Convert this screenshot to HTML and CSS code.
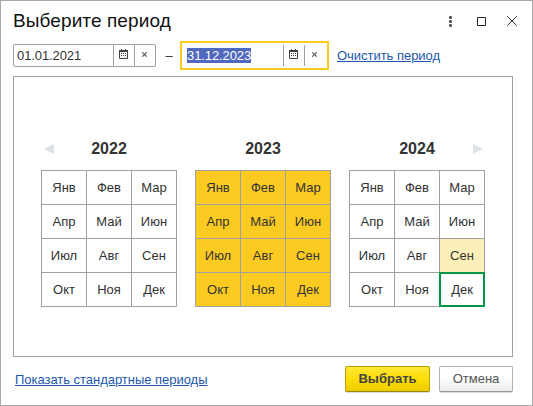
FILE: index.html
```html
<!DOCTYPE html>
<html lang="ru">
<head>
<meta charset="utf-8">
<title>Выберите период</title>
<link rel="stylesheet" href="styles.css">
</head>
<body>
<svg width="0" height="0" class="defs">
  <symbol id="calendar" viewBox="0 0 9 10">
    <path d="M.5 1.5h8v8h-8z" fill="none" stroke="#444"/>
    <path d="M0 1h9v2H0zM2 0h1v1H2zM6 0h1v1H6z" fill="#444"/>
    <path d="M2 4h1v1H2zM4 4h1v1H4zM6 4h1v1H6zM2 6h1v1H2zM4 6h1v1H4zM6 6h1v1H6z" fill="#444"/>
  </symbol>
  <symbol id="clear" viewBox="0 0 5 5">
    <path d="M.3.3l4.400 4.400M4.700.3L.3 4.700" stroke="#555" stroke-width="1.100"/>
  </symbol>
</svg>
<main class="dialog">
  <header class="titlebar">
    <h1 class="title">Выберите период</h1>
    <div class="tools">
      <svg width="3" height="11" viewBox="0 0 3 11"><path d="M0 0h3v3H0zM0 4h3v3H0zM0 8h3v3H0z" fill="#888"/><path d="M1 0h1v3H1zM0 1h3v1H0zM1 4h1v3H1zM0 5h3v1H0zM1 8h1v3H1zM0 9h3v1H0z" fill="#555"/></svg>
      <svg width="9" height="9" viewBox="0 0 9 9"><path d="M.5.5h8v8h-8z" fill="none" stroke="#222"/></svg>
      <svg width="10" height="10" viewBox="0 0 10 10"><path d="M.3.3l9.400 9.400M9.700.3L.3 9.700" stroke="#333"/></svg>
    </div>
  </header>
  <div class="range">
    <div class="field">
      <span class="value">01.01.2021</span>
      <span class="btn"><svg width="9" height="10"><use href="#calendar"/></svg></span>
      <span class="btn"><svg width="5" height="5"><use href="#clear"/></svg></span>
    </div>
    <span class="dash">–</span>
    <div class="field active">
      <span class="value"><mark>31.12.2023</mark></span>
      <span class="btn"><svg width="9" height="10"><use href="#calendar"/></svg></span>
      <span class="btn"><svg width="5" height="5"><use href="#clear"/></svg></span>
    </div>
    <a class="link">Очистить период</a>
  </div>
  <section class="panel">
    <div class="year">
      <div class="head"><svg class="arrow" width="10" height="10" viewBox="0 0 10 10"><path d="M10 0v10L0 5z" fill="#dfe2e5"/></svg><h2>2022</h2></div>
      <div class="months"><span>Янв</span><span>Фев</span><span>Мар</span><span>Апр</span><span>Май</span><span>Июн</span><span>Июл</span><span>Авг</span><span>Сен</span><span>Окт</span><span>Ноя</span><span>Дек</span></div>
    </div>
    <div class="year selected">
      <div class="head"><h2>2023</h2></div>
      <div class="months"><span>Янв</span><span>Фев</span><span>Мар</span><span>Апр</span><span>Май</span><span>Июн</span><span>Июл</span><span>Авг</span><span>Сен</span><span>Окт</span><span>Ноя</span><span>Дек</span></div>
    </div>
    <div class="year">
      <div class="head"><h2>2024</h2><svg class="arrow next" width="10" height="10" viewBox="0 0 10 10"><path d="M0 0v10l10-5z" fill="#dfe2e5"/></svg></div>
      <div class="months"><span>Янв</span><span>Фев</span><span>Мар</span><span>Апр</span><span>Май</span><span>Июн</span><span>Июл</span><span>Авг</span><span class="today">Сен</span><span>Окт</span><span>Ноя</span><span class="focus">Дек</span></div>
    </div>
  </section>
  <footer class="footer">
    <a class="link">Показать стандартные периоды</a>
    <div class="actions">
      <button class="button primary">Выбрать</button>
      <button class="button">Отмена</button>
    </div>
  </footer>
</main>
</body>
</html>
```
FILE: styles.css
```css
* { box-sizing: border-box; }
body {
  margin: 0;
  font: 13px/15px "Liberation Sans", Arial, sans-serif;
  color: #333;
  background: #fff;
}
svg { display: block; }
.defs { position: absolute; }
.dialog {
  width: 533px;
  height: 406px;
  border: 1px solid #a9a9a9;
  padding: 0 19px 0 12px;
  display: flex;
  flex-direction: column;
}
.titlebar {
  height: 40px;
  flex: none;
  display: flex;
  align-items: center;
  justify-content: space-between;
  margin-right: -4px;
}
.title { margin: 0; font-size: 19px; line-height: 24px; font-weight: 400; letter-spacing: 0.1px; color: #111; }
.tools { display: flex; align-items: center; gap: 25px; }
.tools svg:nth-child(1) { margin-top: 1px; }
.tools svg:nth-child(2) { margin: 1px -4px 0 0; }
.range { height: 29px; flex: none; display: flex; align-items: center; }
.field {
  width: 143px;
  height: 23px;
  border: 1px solid #a0a0a0;
  border-radius: 2px;
  display: flex;
}
.value { flex: 1; padding: 3px 0 0 3px; letter-spacing: -0.1px; }
.btn {
  width: 21px;
  border-left: 1px solid #a0a0a0;
  display: flex;
  align-items: flex-start;
  justify-content: center;
  padding: 4px 1px 0 0;
}
.btn:last-child { padding-top: 7px; }
.dash { width: 24px; text-align: center; padding-left: 2px; }
.active {
  width: 149px;
  height: 29px;
  border: 2px solid #fbcb21;
  border-radius: 0;
  padding: 2px 3px 2px 2px;
}
.active .btn:last-child { width: 20px; padding-right: 0; }
mark { display: inline-block; background: #5068bd; color: #fff; }
.link { color: #1c57ab; text-decoration: underline; letter-spacing: -0.03px; }
.range .link { margin-left: 8px; }
.panel {
  width: 500px;
  height: 281px;
  flex: none;
  margin-top: 6px;
  border: 1px solid #a0a0a0;
  padding: 59px 27px 0;
  display: flex;
  gap: 18px;
}
.year { width: 136px; }
.head { height: 34px; padding-top: 4px; position: relative; }
.head h2 { margin: 0; font-size: 16px; line-height: 18px; text-align: center; }
.arrow { position: absolute; left: 3px; top: 8px; }
.next { left: auto; right: 2px; }
.months {
  display: grid;
  grid-template-columns: repeat(3, 44px);
  grid-template-rows: repeat(4, 33px);
  gap: 1px;
  padding: 1px;
  background: #a0a0a0;
}
.months span {
  display: flex;
  align-items: center;
  justify-content: center;
  background: #fff;
}
.selected .months span { background: #fbcb21; }
.months .today { background: #fdefba; }
.months .focus { box-shadow: 0 0 0 1px #049648, inset 0 0 0 1px #049648; }
.footer {
  display: flex;
  justify-content: space-between;
  padding: 9px 0 0 2px;
}
.footer .link { margin-top: 6px; }
.actions { display: flex; gap: 9px; }
.button {
  width: 74px;
  height: 26px;
  padding: 0 0 1px;
  border: 1px solid #b0b0b0;
  border-bottom-color: #999;
  border-radius: 2px;
  background: linear-gradient(#fff 40%, #ededed);
  box-shadow: 0 1px 0 #ddd;
  font: inherit;
  color: #555;
}
.primary {
  width: 85px;
  border-color: #b5a000 #b5a000 #988600;
  background: linear-gradient(#ffe838, #fbdc00 55%, #edcb00);
  font-weight: 700;
  color: #444;
}
```
